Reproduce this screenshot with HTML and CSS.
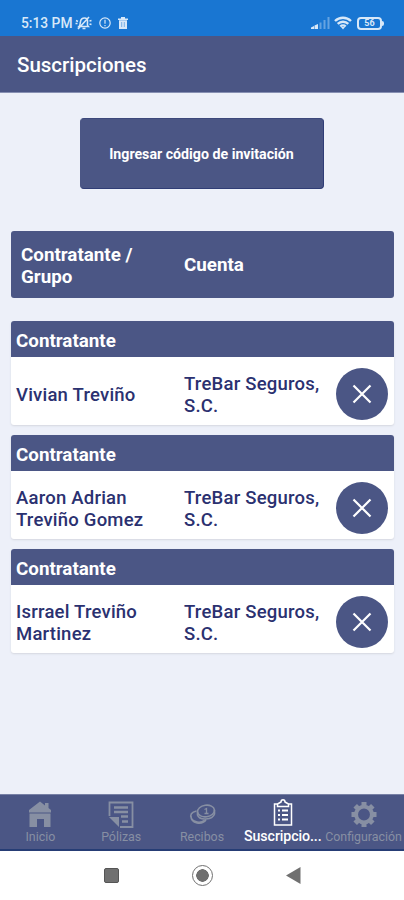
FILE: index.html
```
<!DOCTYPE html>
<html lang="es">
<head>
<meta charset="utf-8">
<meta name="viewport" content="width=device-width, initial-scale=1">
<title>Suscripciones</title>
<link rel="stylesheet" href="styles.css">
</head>
<body>
<div class="screen">
  <div class="status">
    <span class="time">5:13 PM</span>
    <svg class="s-mute" width="17" height="14" viewBox="0 0 17 14" fill="none" stroke="currentColor" stroke-width="1.6"><path d="M4 10.5c1.500-1.500 1-3 1.500-5C6 3 7.500 2 9.500 2s3.500 1.500 3 4c-.3 1.700-.5 3 .8 4.500zM7.500 12.500h3M3 13 14 1M1 4.500l2 1M.5 7.500h2M14.500 5l2-.5M14.500 8l2 .5"/></svg>
    <svg class="s-clock" width="12" height="12" viewBox="0 0 12 12" fill="none" stroke="currentColor" stroke-width="1.200"><circle cx="6" cy="6" r="5.200"/><path d="M6 2.800v4M6 8v1.200"/></svg>
    <svg class="s-trash" width="10" height="12" viewBox="0 0 10 12"><path fill="currentColor" d="M0 1.500h3V0h4v1.500h3V3H0zM1 3.200h8V12H1z"/><path d="M3.700 5v5M6.300 5v5" stroke="#1976d2" stroke-width=".5"/></svg>
    <svg class="s-signal" width="19" height="12" viewBox="0 0 19 12" fill="currentColor"><path d="M0 10.500 3 9v3H0zM3.500 8.500 7 7v5H3.500z"/><path opacity=".4" d="M8.500 5.500h2V12h-2zM12.500 3h2v9h-2zM16.500 0h2v12h-2z"/></svg>
    <svg class="s-wifi" width="18" height="14" viewBox="0 0 18 14" fill="none" stroke="currentColor" stroke-width="2.400"><path d="M1 5c4.500-4.300 11.500-4.300 16 0M3.700 7.900c3-2.900 7.600-2.900 10.600 0M6.300 10.500c1.500-1.500 3.900-1.500 5.400 0"/><path d="m7 11 2 2.500 2-2.500z" fill="currentColor" stroke="none"/></svg>
    <span class="battery">56</span>
  </div>
  <header class="appbar"><h1>Suscripciones</h1></header>
  <main>
    <button class="invite">Ingresar código de invitación</button>
    <div class="columns"><span>Contratante /<br>Grupo</span><span>Cuenta</span></div>
    <section class="list">
      <article class="card">
        <h2>Contratante</h2>
        <div class="row"><span>Vivian Treviño</span><span>TreBar Seguros,<br>S.C.</span><button class="close" aria-label="Eliminar"><svg width="20" height="20" viewBox="0 0 20 20"><path d="m1.500 1.500 17 17m0-17-17 17"/></svg></button></div>
      </article>
      <article class="card">
        <h2>Contratante</h2>
        <div class="row"><span>Aaron Adrian<br>Treviño Gomez</span><span>TreBar Seguros,<br>S.C.</span><button class="close" aria-label="Eliminar"><svg width="20" height="20" viewBox="0 0 20 20"><path d="m1.500 1.500 17 17m0-17-17 17"/></svg></button></div>
      </article>
      <article class="card">
        <h2>Contratante</h2>
        <div class="row"><span>Isrrael Treviño<br>Martinez</span><span>TreBar Seguros,<br>S.C.</span><button class="close" aria-label="Eliminar"><svg width="20" height="20" viewBox="0 0 20 20"><path d="m1.500 1.500 17 17m0-17-17 17"/></svg></button></div>
      </article>
    </section>
  </main>
  <nav class="tabs">
    <a class="tab"><svg width="28" height="28" viewBox="0 0 28 28" fill="currentColor"><path d="M14 1.500 3 10v2.500h22V10l-2.500-2V3H19v2.500zM3.500 13.500h21V27H18v-8h-7v8H3.500z"/></svg><span>Inicio</span></a>
    <a class="tab"><svg width="28" height="28" viewBox="0 0 28 28" fill="none" stroke="currentColor" stroke-width="1.800"><path d="M2.500 16V2.500h23V27H13"/><path d="M7 7.500h14M7 12h14M14 16.500h7M15 21.500h6" stroke-width="2.500"/><path d="M2 17h10v10z" fill="currentColor" stroke="none"/></svg><span>Pólizas</span></a>
    <a class="tab"><svg width="28" height="28" viewBox="0 0 28 28" fill="none" stroke="currentColor" stroke-width="1.600"><ellipse cx="18" cy="11" rx="8.500" ry="5.800" transform="rotate(-8 18 11)"/><path d="M9.500 12v3c2 6 15 5 17-1v-4M8.500 11c-5 1-7 4-5 7.500 2 4 9 5 13 2M3 16c0 8 11 9 15 4"/><path d="m16.500 9.500 2-1v5m-2 0h4" stroke-width="1.300"/></svg><span>Recibos</span></a>
    <a class="tab active"><svg width="28" height="28" viewBox="0 0 28 28" fill="none" stroke="currentColor" stroke-width="1.500"><path d="M9 5H5.500v21h17V5H19M8.500 7.500V5L12 3c0-3 4-3 4 0l3.500 2v2.500z"/><path d="M9 11.500h2m2 0h6M9 16h2m2 0h6M9 20.500h2m2 0h6" stroke-width="1.900"/></svg><span>Suscripcio...</span></a>
    <a class="tab"><svg width="28" height="28" viewBox="0 0 28 28" fill="none" stroke="currentColor"><circle cx="14" cy="14.500" r="7.900" stroke-width="3.900"/><path stroke-width="5" d="M14 2v4M14 23v4M1.500 14.500h4M22.500 14.500h4M5.200 5.700 8 8.500M20 20.500l2.800 2.800M5.200 23.300 8 20.500M20 8.500l2.800-2.800"/></svg><span>Configuración</span></a>
  </nav>
  <div class="system">
    <i class="recent"></i><i class="home"></i><svg width="15" height="17" viewBox="0 0 15 17"><path d="M0 8.500 14.500 0v17z" fill="#707070"/></svg>
  </div>
</div>
</body>
</html>
```
FILE: styles.css
```
* { box-sizing: border-box; }
body { margin: 0; font-family: Roboto, "Liberation Sans", sans-serif; }
.screen { width: 404px; height: 900px; display: flex; flex-direction: column; background: #edf0f9; overflow: hidden; }
.status { height: 36px; flex: none; background: #1976d2; color: #d8e8f8; display: flex; align-items: center; padding: 10px 22px 0 21px; }
.time { font-size: 13.8px; font-weight: 500; width: 54px; white-space: nowrap; }
.s-mute { margin-left: 0; }
.s-clock { margin-left: 7px; }
.s-trash { margin-left: 7px; }
.s-signal { margin-left: auto; }
.s-wifi { margin-left: 4px; }
.battery { width: 25px; height: 13px; margin-left: 5px; border: 2px solid #d8e8f8; border-radius: 4px; font-size: 9px; line-height: 9px; font-weight: 700; text-align: center; position: relative; }
.battery::after { content: ""; position: absolute; right: -4px; top: 2px; width: 3px; height: 5px; background: #d8e8f8; border-radius: 0 2px 2px 0; }
.appbar { height: 57px; flex: none; display: flex; align-items: center; padding: 2px 17px 0; background: #4b5685; border-bottom: 1px solid #8790b3; color: #fff; }
h1 { margin: 0; font-size: 20.5px; font-weight: 500; }
main { flex: 1; padding: 25px 10px 0 11px; display: flex; flex-direction: column; }
button { border: 0; padding: 0; font-family: inherit; color: #fff; background: #4b5685; }
.invite { width: 244px; height: 71px; margin-right: 2px; align-self: center; border: 1px solid #303d76; border-top-color: #3d497c; border-left-color: #4b5685; border-radius: 4px; font-size: 14.2px; font-weight: 700; white-space: nowrap; }
.columns { height: 67px; margin-top: 42px; display: grid; grid-template-columns: 163px 1fr; align-items: center; padding: 2px 10px 0; background: #4b5685; border-radius: 3px; color: #fff; font-size: 18.8px; line-height: 22px; font-weight: 700; }
.columns span:last-child { padding-bottom: 1px; }
.list { display: flex; flex-direction: column; gap: 10px; margin-top: 23px; }
.card { height: 104px; background: #fff; border-radius: 3px; overflow: hidden; box-shadow: 0 1px 2px #d5d7df; }
h2 { margin: 0; height: 36px; padding: 1px 5px 0; background: #4b5685; color: #fff; font-size: 18.8px; line-height: 38px; font-weight: 700; }
.row { height: 68px; display: grid; grid-template-columns: 168px 152px 52px; align-items: center; padding: 6px 5px 0; color: #2b3170; font-size: 18.5px; line-height: 22px; font-weight: 500; letter-spacing: .22px; white-space: nowrap; }
.row span { padding-top: 2px; }
.close { width: 52px; height: 52px; border-radius: 50%; display: grid; place-items: center; }
.close path { fill: none; stroke: #fff; stroke-width: 2.2; }
.tabs { height: 57px; flex: none; display: grid; grid-template-columns: repeat(5, 1fr); background: #4b5685; border-top: 1px solid #7881a6; border-bottom: 2px solid #263d75; }
.tab { display: flex; flex-direction: column; align-items: center; padding-top: 5px; min-width: 0; color: #878fa3; font-size: 12.4px; line-height: 15px; white-space: nowrap; }
.tab span { margin-top: 1px; }
.active { padding-top: 4px; color: #fff; font-size: 14.2px; font-weight: 500; }
.active span { margin-top: 2px; letter-spacing: -.1px; }
.system { height: 49px; flex: none; background: #fff; display: flex; justify-content: center; align-items: center; gap: 73px; padding-bottom: 0; }
.recent { width: 15px; height: 15px; background: #707070; border: 1px solid #555; border-radius: 2px; }
.home { width: 21px; height: 21px; border-radius: 50%; border: 1.5px solid #707070; background: radial-gradient(circle, #707070 0 6px, #fff 6.5px); }
```
